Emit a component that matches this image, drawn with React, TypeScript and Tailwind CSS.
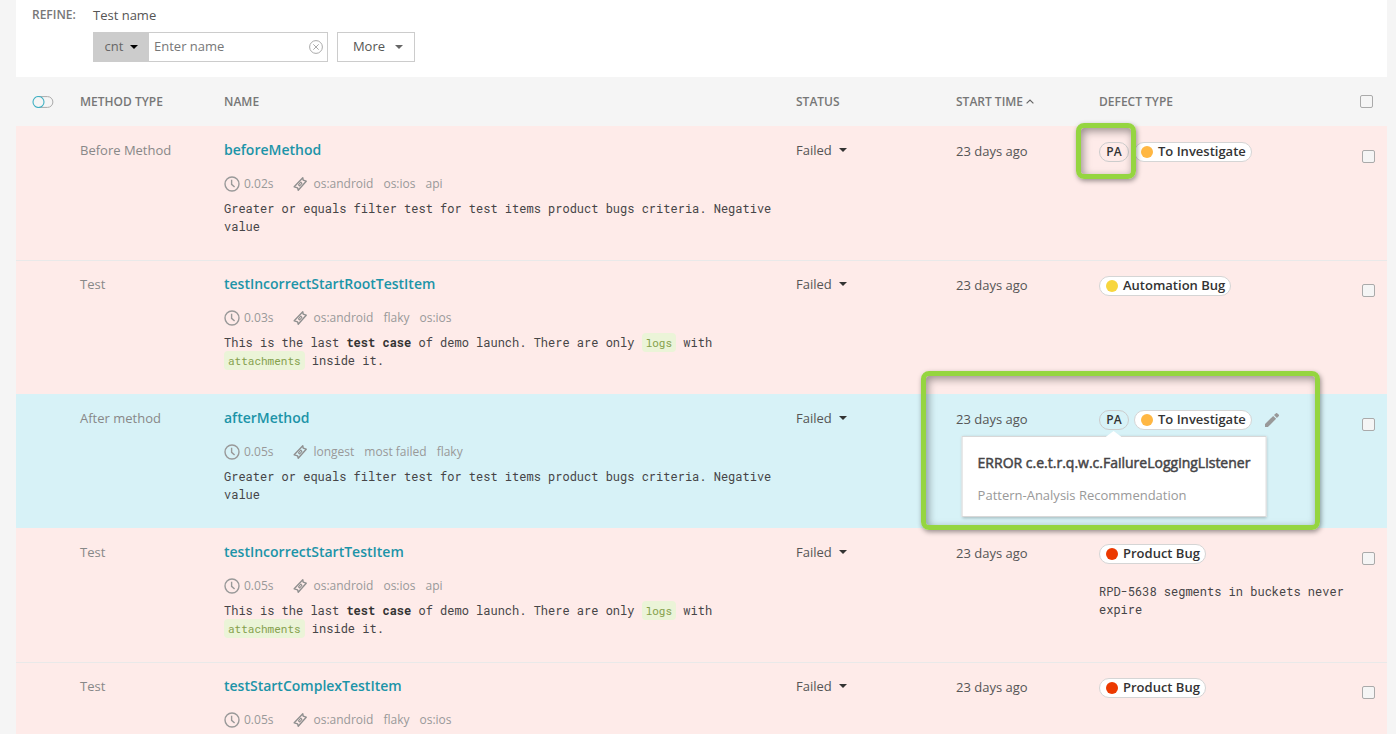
import React from "react";

type Defect = "investigate" | "automation" | "product";

interface Item {
  id: string;
  type: string;
  name: string;
  duration: string;
  tags: string[];
  description?: React.ReactNode;
  defect: Defect;
  pattern?: boolean;
  active?: boolean;
  comment?: string;
  topLine?: boolean;
  callout?: "small" | "large";
}

const DEFECTS: Record<Defect, { label: string; dot: string }> = {
  investigate: { label: "To Investigate", dot: "bg-[#ffb743]" },
  automation: { label: "Automation Bug", dot: "bg-[#f7d63e]" },
  product: { label: "Product Bug", dot: "bg-[#ec3900]" },
};

const MONO = "font-['Roboto_Mono','Liberation_Mono',monospace]";

function Code({ children }: { children: React.ReactNode }) {
  return (
    <code className={`${MONO} rounded bg-[#ebf4d8] px-1 py-0.5 text-[11px] leading-[14px] text-[#85a04c]`}>{children}</code>
  );
}

const greater = "Greater or equals filter test for test items product bugs criteria. Negative value";
const demo = (
  <>
    This is the last <b className="text-[#333]">test case</b> of demo launch. There are only <Code>logs</Code> with{" "}
    <Code>attachments</Code> inside it.
  </>
);

const ITEMS: Item[] = [
  { id: "1", type: "Before Method", name: "beforeMethod", duration: "0.02s", tags: ["os:android", "os:ios", "api"], description: greater, defect: "investigate", pattern: true, callout: "small" },
  { id: "2", type: "Test", name: "testIncorrectStartRootTestItem", duration: "0.03s", tags: ["os:android", "flaky", "os:ios"], description: demo, defect: "automation", topLine: true },
  { id: "3", type: "After method", name: "afterMethod", duration: "0.05s", tags: ["longest", "most failed", "flaky"], description: greater, defect: "investigate", pattern: true, active: true, callout: "large" },
  { id: "4", type: "Test", name: "testIncorrectStartTestItem", duration: "0.05s", tags: ["os:android", "os:ios", "api"], description: demo, defect: "product", comment: "RPD-5638 segments in buckets never expire" },
  { id: "5", type: "Test", name: "testStartComplexTestItem", duration: "0.05s", tags: ["os:android", "flaky", "os:ios"], defect: "product", topLine: true },
];

function Caret({ className }: { className: string }) {
  return (
    <svg viewBox="0 0 8 4" className={`h-1 w-2 ${className}`} aria-hidden="true">
      <path d="M0 0h8L4 4z" fill="currentColor" />
    </svg>
  );
}

function ClockIcon() {
  return (
    <svg viewBox="0 0 16 16" className="size-4" fill="none" stroke="#999" strokeWidth="1.4" aria-hidden="true">
      <circle cx="8" cy="8" r="7" />
      <path d="M7.6 3.8v4.6l3 2.6" />
    </svg>
  );
}

function TagIcon() {
  return (
    <svg viewBox="0 0 14 14" className="size-3.5" fill="none" stroke="#8f8f8f" strokeWidth="1.4" strokeLinejoin="round" aria-hidden="true">
      <path d="M9.8.8 10.2 3.2 13.2 4.2 5.2 13.2 4.6 10.8 1.2 9.8z" />
      <path d="M7.8 5 8.9 6.4 6.7 9 5.5 7.8z" strokeWidth="1.1" />
    </svg>
  );
}

function PencilIcon() {
  return (
    <svg viewBox="0 0 14 14" className="size-3.5" fill="#999" aria-hidden="true">
      <path d="M0 14v-2.9L8.2 2.9l2.9 2.9L2.9 14zM9 2.1 10.7.4a1.2 1.2 0 0 1 1.7 0l1.2 1.2a1.2 1.2 0 0 1 0 1.7L11.9 5z" />
    </svg>
  );
}

function Check({ label }: { label: string }) {
  return (
    <input
      type="checkbox"
      aria-label={label}
      className="block size-[13px] appearance-none rounded-xs border border-[#aaa] bg-[#f5f5f5]"
    />
  );
}

function Tooltip() {
  return (
    <div
      role="tooltip"
      className="absolute top-full left-1/2 z-10 mt-[7px] -translate-x-1/2 border border-[#d8d8d8] bg-white px-[15px] pt-[17px] pb-[12px] whitespace-nowrap shadow-[0_1px_3px_rgba(0,0,0,0.25)]"
    >
      <svg viewBox="0 0 16 6" className="absolute -top-1.5 left-1/2 h-1.5 w-4 -translate-x-1/2" aria-hidden="true">
        <path d="M0 6 8 0l8 6z" fill="#fff" />
      </svg>
      <p className="text-sm leading-[18px] font-normal text-[#464547] [-webkit-text-stroke:0.5px_#464547]">
        ERROR c.e.t.r.q.w.c.FailureLoggingListener
      </p>
      <p className="mt-[14px] text-[13px] leading-[18px] font-normal text-[#999]">Pattern-Analysis Recommendation</p>
    </div>
  );
}

function Row({ item }: { item: Item }) {
  const defect = DEFECTS[item.defect];
  return (
    <tr
      className={`align-top ${item.active ? "bg-[#d7f2f7]" : "bg-[#feebe9]"} ${
        item.topLine ? "shadow-[inset_0_1px_0_#e9e9e9]" : ""
      }`}
    >
      <td />
      <td className="pt-[15px] leading-[18px] text-[#888]">{item.type}</td>
      <td className="pt-[15px] pb-[25px]">
        <a href={`#${item.id}`} className="block text-sm leading-[18px] font-semibold text-[#1c94a8]">
          {item.name}
        </a>
        <div className="mt-4 mb-1.5 flex items-center text-[12px] leading-[18px] text-[#999]">
          <ClockIcon />
          <span className="ml-1">{item.duration}</span>
          <span className="mr-1.5 ml-5">
            <TagIcon />
          </span>
          <span className="flex gap-2.5">
            {item.tags.map((t) => (
              <span key={t}>{t}</span>
            ))}
          </span>
        </div>
        {item.description && (
          <p className={`${MONO} max-w-[556px] text-xs leading-[18px] text-[#464547]`}>{item.description}</p>
        )}
      </td>
      <td className="pt-[15px]">
        <button type="button" className="flex items-center gap-[7px] leading-[18px] text-[#555]">
          Failed
          <Caret className="text-[#333]" />
        </button>
      </td>
      <td className="pt-4 leading-[18px] text-[#555]">23 days ago</td>
      <td className="relative pt-4">
        <div className="flex items-center gap-[5px] font-semibold text-[#333]">
          {item.pattern && (
            <span className="relative flex h-5 w-[30px] items-center justify-center rounded-full border border-[#ccc] text-xs">
              PA
              {item.active && <Tooltip />}
            </span>
          )}
          <span className="flex h-5 items-center gap-[5px] rounded-full border border-[#d5d5d5] bg-white pr-[5px] pl-1.5">
            <span className={`size-3 rounded-full ${defect.dot}`} />
            {defect.label}
          </span>
          {item.active && (
            <button type="button" aria-label="Edit defect" className="ml-2">
              <PencilIcon />
            </button>
          )}
        </div>
        {item.comment && (
          <p className={`${MONO} mt-[18px] text-xs leading-[18px] text-[#464547]`}>{item.comment}</p>
        )}
        {item.callout === "small" && (
          <div className="pointer-events-none absolute -top-[3px] -left-[23px] z-20 h-14 w-[60px] rounded-lg border-5 border-[#95d540] shadow-[1px_2px_5px_rgba(0,0,0,0.4),inset_2px_3px_8px_rgba(0,0,0,0.4)]" />
        )}
        {item.callout === "large" && (
          <div className="pointer-events-none absolute -top-[23px] right-10 -bottom-0.5 -left-[178px] z-20 rounded-lg border-5 border-[#95d540] shadow-[1px_2px_5px_rgba(0,0,0,0.4),inset_2px_3px_8px_rgba(0,0,0,0.4)]" />
        )}
      </td>
      <td className="pt-6 pl-0.5">
        <Check label={`Select ${item.name}`} />
      </td>
    </tr>
  );
}

export default function App() {
  return (
    <div className="h-screen overflow-hidden bg-[#f5f5f5] pr-[9px] pl-4 font-['Open_Sans',sans-serif] text-[13px] text-[#464547]">
      <section className="flex bg-white pt-1.5 pb-[15px] pl-4 text-[#555]">
        <h2 className="w-[61px] text-xs leading-[18px] font-semibold text-[#777]">REFINE:</h2>
        <div>
          <label htmlFor="test-name" className="block leading-[18px]">
            Test name
          </label>
          <div className="mt-2 flex gap-[9px]">
            <div className="flex h-[30px] w-[235px] border border-[#ccc]">
              <button type="button" className="flex w-[55px] shrink-0 items-center justify-center gap-[7px] bg-[#ccc] text-[#666]">
                cnt
                <Caret className="text-black" />
              </button>
              <input id="test-name" type="text" placeholder="Enter name" className="min-w-0 flex-1 pl-[5px] outline-none placeholder:text-[#777]" />
              <button type="button" aria-label="Clear" className="mr-1 shrink-0">
                <svg viewBox="0 0 14 14" className="size-3.5" fill="none" stroke="#aaa" aria-hidden="true">
                  <circle cx="7" cy="7" r="6.4" />
                  <path d="m4.3 4.3 5.4 5.4m0-5.4L4.3 9.7" />
                </svg>
              </button>
            </div>
            <button type="button" className="flex h-[30px] w-[78px] items-center justify-center gap-2.5 border border-[#ccc] pl-1">
              More
              <Caret className="text-[#666]" />
            </button>
          </div>
        </div>
      </section>
      <table className="w-full table-fixed">
        <colgroup>
          <col className="w-16" />
          <col className="w-36" />
          <col />
          <col className="w-40" />
          <col className="w-[143px]" />
          <col className="w-[261px]" />
          <col className="w-[27px]" />
        </colgroup>
        <thead>
          <tr className="h-[49px] text-left text-xs text-[#777] [&>th]:font-semibold">
            <th className="pl-4">
              <button type="button" aria-label="Toggle view" className="block">
                <svg viewBox="0 0 22 12" className="h-3 w-[22px]" fill="none" aria-hidden="true">
                  <path d="M6.5.6h9a5.4 5.4 0 0 1 0 10.8h-9" stroke="#aaa" />
                  <circle cx="6.5" cy="6" r="5.5" stroke="#3fb0c3" strokeWidth="1.1" />
                </svg>
              </button>
            </th>
            <th>METHOD TYPE</th>
            <th>NAME</th>
            <th>STATUS</th>
            <th>
              <span className="flex items-center gap-[3px]">
                START TIME
                <svg viewBox="0 0 8 5" className="h-[5px] w-2" fill="none" stroke="#666" strokeWidth="1.2" aria-hidden="true">
                  <path d="M.6 4.4 4 1l3.4 3.4" />
                </svg>
              </span>
            </th>
            <th>DEFECT TYPE</th>
            <th>
              <Check label="Select all" />
            </th>
          </tr>
        </thead>
        <tbody>
          {ITEMS.map((i) => (
            <Row key={i.id} item={i} />
          ))}
        </tbody>
      </table>
    </div>
  );
}
